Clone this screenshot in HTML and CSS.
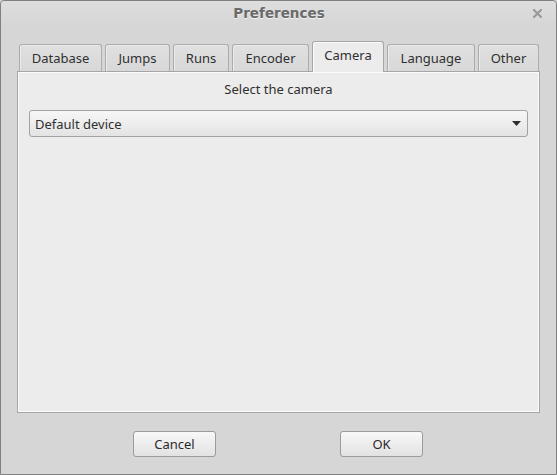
FILE: index.html
```html
<!DOCTYPE html>
<html>
<head>
<meta charset="utf-8">
<link rel="stylesheet" href="styles.css">
</head>
<body>
<div class="window">
  <div class="titlebar">
    <span class="title">Preferences</span>
    <span class="close">
      <svg width="9" height="9" viewBox="0 0 9 9"><path d="M1 1 L8 8 M8 1 L1 8" stroke="#9a9a9a" stroke-width="2.2" stroke-linecap="square"/></svg>
    </span>
  </div>
  <div class="content">
    <div class="tabs">
      <div class="tab t-db">Database</div>
      <div class="tab t-jumps">Jumps</div>
      <div class="tab t-runs">Runs</div>
      <div class="tab t-enc">Encoder</div>
      <div class="tab active t-cam">Camera</div>
      <div class="tab t-lang">Language</div>
      <div class="tab t-other">Other</div>
    </div>
    <div class="panel">
      <div class="label">Select the camera</div>
      <div class="combo">
        <span>Default device</span>
        <svg class="arrow" width="9" height="5" viewBox="0 0 9 5"><path d="M0 0 H9 L4.5 5 Z" fill="#2e2e2e"/></svg>
      </div>
    </div>
    <div class="buttons">
      <div class="btn">Cancel</div>
      <div class="btn">OK</div>
    </div>
  </div>
</div>
</body>
</html>
```
FILE: styles.css
```css
html, body {
  margin: 0;
  padding: 0;
  background: #d6d6d6;
}
.window {
  width: 557px;
  height: 475px;
  box-sizing: border-box;
  border: 1px solid #808080;
  border-radius: 4px 4px 0 0;
  background: #d6d6d6;
  font-family: "Noto Sans", "Open Sans", sans-serif;
  font-size: 13px;
  color: #303030;
  display: flex;
  flex-direction: column;
}
.titlebar {
  height: 24px;
  display: flex;
  align-items: center;
  justify-content: center;
  position: relative;
  background: linear-gradient(#dedede, #d6d6d6);
  border-radius: 4px 4px 0 0;
}
.title {
  font-family: "DejaVu Sans", sans-serif;
  font-weight: bold;
  font-size: 13.5px;
  color: #6a6a6a;
  text-shadow: 0 1px 0 #f2f2f2;
  margin-left: 1px;
}
.close {
  position: absolute;
  right: 14px;
  top: 8px;
  display: flex;
}
.content {
  flex: 1;
  display: flex;
  flex-direction: column;
  padding: 16px 16px 0 16px;
}
.tabs {
  display: flex;
  align-items: flex-end;
  gap: 3px;
  padding-left: 2px;
  height: 30px;
  position: relative;
  z-index: 1;
}
.tab {
  flex: none;
  height: 27px;
  box-sizing: border-box;
  border: 1px solid #acacac;
  border-bottom: none;
  border-radius: 3px 3px 0 0;
  background: linear-gradient(#e0e0e0, #d8d8d8);
  box-shadow: inset 1px 1px 0 #eaeaea;
  display: flex;
  align-items: center;
  justify-content: center;
}
.tab.active {
  height: 31px;
  margin-bottom: -1px;
  background: #ececec;
  border-color: #a6a6a6;
  box-shadow: inset 1px 1px 0 #fafafa;
  padding-bottom: 4px;
}
.t-db { width: 83px; }
.t-jumps { width: 65px; }
.t-runs { width: 56px; }
.t-enc { width: 77px; }
.t-cam { width: 72px; }
.t-lang { width: 88px; }
.t-other { width: 61px; }
.panel {
  height: 342px;
  box-sizing: border-box;
  border: 1px solid #a6a6a6;
  background: #ececec;
  box-shadow: inset 1px 1px 0 #fbfbfb, inset -1px -1px 0 #fbfbfb;
  padding: 8px 11px 0 11px;
  display: flex;
  flex-direction: column;
}
.label {
  text-align: center;
  height: 20px;
  line-height: 18px;
  margin-bottom: 10px;
}
.combo {
  height: 27px;
  box-sizing: border-box;
  border: 1px solid #a2a2a2;
  border-radius: 3px;
  background: linear-gradient(#f7f7f7, #e3e3e3);
  display: flex;
  align-items: center;
  justify-content: space-between;
  padding: 0 6px 0 5px;
}
.arrow {
  margin-bottom: 1px;
}
.buttons {
  display: flex;
  justify-content: center;
  gap: 124px;
  padding-top: 18px;
  padding-right: 1px;
}
.btn {
  width: 83px;
  height: 26px;
  box-sizing: border-box;
  border: 1px solid #9c9c9c;
  border-radius: 3px;
  background: linear-gradient(#f8f8f8, #e2e2e2);
  display: flex;
  align-items: center;
  justify-content: center;
  color: #2a2a2a;
}
```
